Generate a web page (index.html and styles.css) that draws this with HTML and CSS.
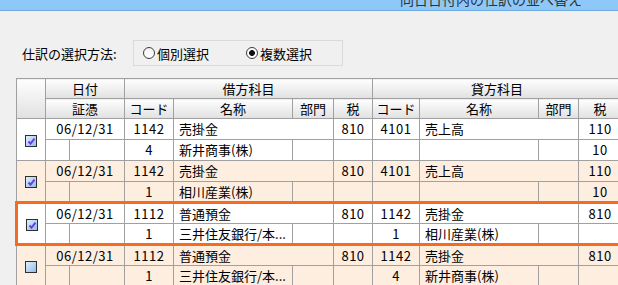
FILE: index.html
```html
<!DOCTYPE html>
<html lang="ja">
<head>
  <meta charset="UTF-8" />
  <title>仕訳の並べ替え</title>
  <link rel="stylesheet" href="styles.css">
</head>
<body>
  <div class="titlebar">
    <span class="title">同日日付内の仕訳の並べ替え</span>
  </div>

  <div class="mode">
    <span class="mode-label">仕訳の選択方法:</span>
    <div class="mode-box">
      <label class="radio"><span class="dot"></span>個別選択</label>
      <label class="radio on"><span class="dot"></span>複数選択</label>
    </div>
  </div>

  <div class="grid-wrap">
    <table class="grid">
      <colgroup>
        <col class="w-chk"><col class="w-a"><col class="w-b"><col class="w-code"><col class="w-name">
        <col class="w-dept"><col class="w-tax"><col class="w-ccode"><col class="w-cname"><col class="w-cdept"><col class="w-ctax">
      </colgroup>
      <thead>
        <tr>
          <th rowspan="2"></th>
          <th colspan="2">日付</th>
          <th colspan="4">借方科目</th>
          <th colspan="4">貸方科目</th>
        </tr>
        <tr>
          <th colspan="2">証憑</th>
          <th>コード</th>
          <th>名称</th>
          <th>部門</th>
          <th>税</th>
          <th>コード</th>
          <th>名称</th>
          <th>部門</th>
          <th>税</th>
        </tr>
      </thead>

      <tbody>
        <tr>
          <td class="chk" rowspan="2"><span class="box checked"><svg width="11" height="11" viewBox="0 0 11 11"><path d="M2.5 5.5l2 2.2 4-5" fill="none" stroke="#6b3fe6" stroke-width="2"/></svg></span></td>
          <td class="c" colspan="2">06/12/31</td>
          <td class="c">1142</td>
          <td colspan="2">売掛金</td>
          <td class="c">810</td>
          <td class="c">4101</td>
          <td colspan="2">売上高</td>
          <td class="c">110</td>
        </tr>
        <tr>
          <td></td><td></td>
          <td class="c">4</td>
          <td>新井商事(株)</td>
          <td></td><td></td><td></td><td></td><td></td>
          <td class="c">10</td>
        </tr>
      </tbody>

      <tbody class="alt">
        <tr>
          <td class="chk" rowspan="2"><span class="box checked"><svg width="11" height="11" viewBox="0 0 11 11"><path d="M2.5 5.5l2 2.2 4-5" fill="none" stroke="#6b3fe6" stroke-width="2"/></svg></span></td>
          <td class="c" colspan="2">06/12/31</td>
          <td class="c">1142</td>
          <td colspan="2">売掛金</td>
          <td class="c">810</td>
          <td class="c">4101</td>
          <td colspan="2">売上高</td>
          <td class="c">110</td>
        </tr>
        <tr>
          <td></td><td></td>
          <td class="c">1</td>
          <td>相川産業(株)</td>
          <td></td><td></td><td></td><td></td><td></td>
          <td class="c">10</td>
        </tr>
      </tbody>

      <tbody class="sel">
        <tr>
          <td class="chk" rowspan="2"><span class="box checked"><svg width="11" height="11" viewBox="0 0 11 11"><path d="M2.5 5.5l2 2.2 4-5" fill="none" stroke="#6b3fe6" stroke-width="2"/></svg></span></td>
          <td class="c" colspan="2">06/12/31</td>
          <td class="c">1112</td>
          <td colspan="2">普通預金</td>
          <td class="c">810</td>
          <td class="c">1142</td>
          <td colspan="2">売掛金</td>
          <td class="c">810</td>
        </tr>
        <tr>
          <td></td><td></td>
          <td class="c">1</td>
          <td>三井住友銀行/本...</td>
          <td></td><td></td>
          <td class="c">1</td>
          <td>相川産業(株)</td>
          <td></td><td></td>
        </tr>
      </tbody>

      <tbody class="alt">
        <tr>
          <td class="chk" rowspan="2"><span class="box"></span></td>
          <td class="c" colspan="2">06/12/31</td>
          <td class="c">1112</td>
          <td colspan="2">普通預金</td>
          <td class="c">810</td>
          <td class="c">1142</td>
          <td colspan="2">売掛金</td>
          <td class="c">810</td>
        </tr>
        <tr>
          <td></td><td></td>
          <td class="c">1</td>
          <td>三井住友銀行/本...</td>
          <td></td><td></td>
          <td class="c">4</td>
          <td>新井商事(株)</td>
          <td></td><td></td>
        </tr>
      </tbody>
    </table>
  </div>
</body>
</html>
```

FILE: styles.css
```css
/* Base */
* {
  box-sizing: border-box;
}

body {
  margin: 0;
  width: 618px;
  height: 285px;
  overflow: hidden;
  background: #f0f0f0;
  font-family: "Noto Sans CJK JP", "Noto Sans", sans-serif;
  font-size: 13px;
  color: #000;
}

/* Window title bar (cut off at the top) */
.titlebar {
  height: 11px;
  background: #8ec8f8;
  border-bottom: 1px solid #6ea8dc;
  overflow: hidden;
  display: flex;
  justify-content: flex-end;
  padding-right: 36px;
}

.title {
  font-size: 14px;
  line-height: 14px;
  margin-top: -8px;
  color: #333;
}

/* Selection mode */
.mode {
  display: flex;
  align-items: center;
  margin-top: 29px;
  padding-left: 22px;
}

.mode-label {
  width: 111px;
}

.mode-box {
  display: flex;
  align-items: center;
  gap: 37px;
  width: 210px;
  height: 26px;
  border: 1px solid #dadada;
  padding-left: 9px;
}

.radio {
  display: flex;
  align-items: center;
  gap: 2px;
}

.dot {
  width: 12px;
  height: 12px;
  border-radius: 50%;
  border: 1px solid #3c3c3c;
  background: linear-gradient(#f2f2f2, #ffffff);
}

.radio.on .dot {
  background: radial-gradient(circle, #111 0 2.6px, #fff 3.2px);
}

/* Grid */
.grid-wrap {
  margin-top: 12px;
  padding-left: 15px;
}

.grid {
  border-collapse: collapse;
  table-layout: fixed;
  width: 605px;
  line-height: 14px;
}

.w-chk { width: 29px; }
.w-a { width: 24px; }
.w-b { width: 55px; }
.w-code { width: 49px; }
.w-name { width: 119px; }
.w-dept { width: 41px; }
.w-tax { width: 39px; }
.w-ccode { width: 47px; }
.w-cname { width: 119px; }
.w-cdept { width: 40px; }
.w-ctax { width: 43px; }

.grid th {
  height: 20px;
  padding: 0;
  font-weight: normal;
  background: linear-gradient(#fefefe, #e1e1e1);
  border: 1px solid #a0a0a0;
}

.grid td {
  height: 21px;
  padding: 0 5px;
  background: #fff;
  border: 1px solid #a0a0a0;
  white-space: nowrap;
  overflow: hidden;
}

.grid td.c {
  text-align: center;
  padding: 0;
  letter-spacing: 0.5px;
}

.grid .alt td {
  background: #fdeee0;
}

/* Selected entry */
.grid .sel tr:first-child td {
  border-top: 3px solid #f56b22;
}

.grid .sel tr:last-child td,
.grid .sel td.chk {
  border-bottom: 3px solid #f56b22;
}

.grid .sel td.chk {
  border-left: 3px solid #f56b22;
}

/* Checkbox */
.grid td.chk {
  padding: 0;
  text-align: center;
}

.box {
  display: inline-block;
  vertical-align: middle;
  width: 12px;
  height: 12px;
  border: 1px solid #2e2e2e;
  background: linear-gradient(135deg, #e2effc, #8ebced);
}

.box svg {
  display: block;
}
```
